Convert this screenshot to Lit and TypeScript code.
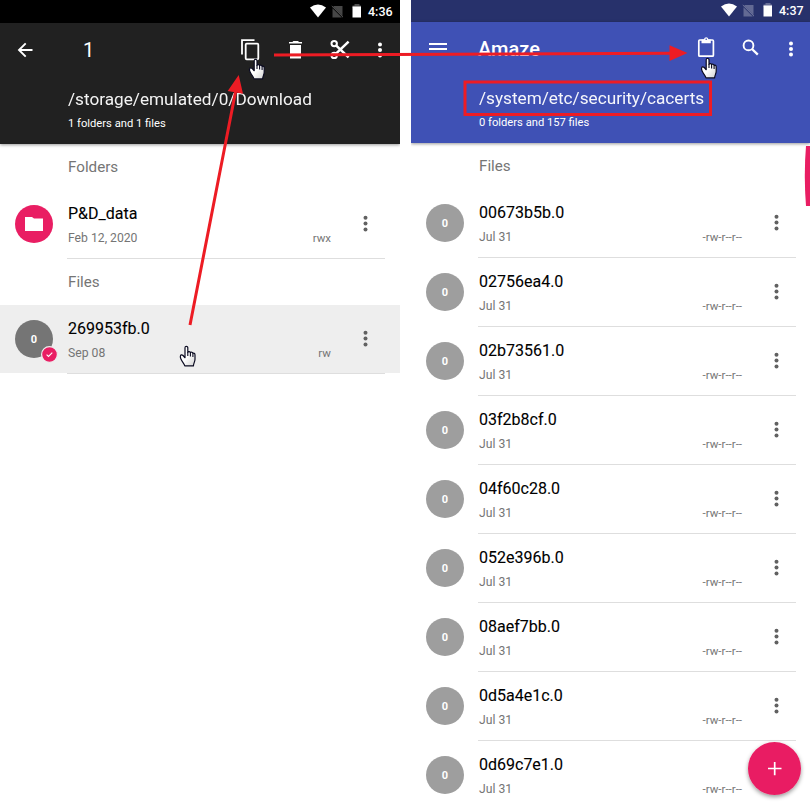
import { LitElement, html, css, svg, nothing } from "lit";
import { customElement, property } from "lit/decorators.js";

interface Entry {
  name: string;
  date: string;
  perms: string;
  folder?: boolean;
  selected?: boolean;
}

const hand = svg`<path d="M5.6 12.2V2.3C5.6 .3 8.4 .3 8.4 2.3V6.8C8.8 5.7 10.9 5.8 11 7.2C11.6 6.4 13.4 6.6 13.5 8C14.2 7.3 15.6 7.8 15.6 9.4V13.8C15.6 16 14.2 17.6 14 20.4H5.4C4.8 18 2.8 16.6 1.4 13.2C.2 10.6 1.4 8.7 3.1 9.6C4.3 10.2 4.6 11.4 5.6 12.2Z" fill="url(#palm)" stroke="#0a0a20" stroke-width="1.2" stroke-linejoin="round"/><path d="M8.4 6.5V10.6M11 7.2V11M13.5 8V11.4" stroke="#0a0a20" stroke-width="1.1" fill="none"/>`;

@customElement("status-bar")
export class StatusBar extends LitElement {
  @property() time = "";
  static styles = css`
    :host { display: flex; justify-content: flex-end; align-items: flex-start; height: 100%; color: #fff; }
    svg { display: block; flex: none; }
    .time { font: 500 12.5px/23px Roboto, sans-serif; width: 25px; margin-left: 5px; white-space: nowrap; }
  `;
  render() {
    return html`<svg width="54" height="22" viewBox="0 0 54 22">
        <path d="M1 7.4Q9 1.6 17 7.4L9 17.4Z" fill="#fff" />
        <path d="M24.5 6H33.5V16L24.5 7ZM23.5 8.2L32.8 17.5H23.5Z" fill="#fff" opacity=".28" />
        <path d="M22.8 6L34 17.2" stroke="#fff" stroke-opacity=".35" />
        <path d="M45.5 4H50.5V5.5H52V8H43.5V5.5H45.5Z" fill="#fff" opacity=".3" />
        <path d="M43.5 6.5H52V17.5H43.5Z" fill="#fff" />
      </svg>
      <div class="time">${this.time}</div>`;
  }
}

@customElement("file-row")
export class FileRow extends LitElement {
  @property({ attribute: false }) entry!: Entry;
  static styles = css`
    :host { display: block; height: 69px; flex: none; }
    .row { display: grid; grid-template-columns: 38px 263px 1fr; column-gap: 15px; height: 69px; padding-left: 15px; box-sizing: border-box; }
    .selected { background: linear-gradient(#eee 68px, transparent 68px); }
    .circle { position: relative; display: grid; place-items: center; width: 38px; height: 38px; margin-top: 15px; border-radius: 50%; background: #9e9e9e; color: #fff; font: 700 11px/39px Roboto, sans-serif; }
    .selected .circle { background: #757575; }
    .circle.folder { background: #e91e63; }
    .badge { position: absolute; left: 26px; top: 26px; }
    .info { display: grid; grid-template-columns: 1fr auto; grid-template-rows: 47px 21px; align-items: start; }
    .name { grid-column: 1 / 3; font: 400 16px/24px Roboto, sans-serif; color: #000; padding-top: 12px; -webkit-text-stroke: .1px #000; }
    .date { font: 400 12.2px/16px Roboto, sans-serif; color: #757575; margin-top: -7px; }
    .perms { font: 400 11.5px/16px Roboto, sans-serif; color: #757575; margin-top: -7px; }
    .line { grid-column: 1 / 3; height: 1px; background: #dedede; margin: 0 -54px 0 -1px; }
    .more { margin-top: 25px; margin-left: 12px; display: block; }
  `;
  render() {
    const e = this.entry;
    return html`<div class="row ${e.selected ? "selected" : ""}">
      <div class="circle ${e.folder ? "folder" : ""}">
        ${e.folder
          ? html`<svg width="18" height="14" viewBox="0 0 18 14"><path d="M0 0H7L9 1.5H18V14H0Z" fill="#fff" /></svg>`
          : "0"}
        ${e.selected
          ? html`<svg class="badge" width="17" height="17" viewBox="0 0 17 17"><circle cx="8.5" cy="8.5" r="7.9" fill="#e91e63" stroke="#eee" stroke-width="1.2" /><path d="M5.6 8.6L7.5 10.5L11.3 6.7" fill="none" stroke="#fff" stroke-width="1.1" /></svg>`
          : nothing}
      </div>
      <div class="info">
        <div class="name">${e.name}</div>
        <div class="date">${e.date}</div>
        <div class="perms">${e.perms}</div>
        <div class="line"></div>
      </div>
      <svg class="more" width="10" height="18" viewBox="0 0 10 18" fill="#616161">
        <circle cx="7.5" cy="2.8" r="2" /><circle cx="7.5" cy="8.6" r="2" /><circle cx="7.5" cy="14.4" r="2" />
      </svg>
    </div>`;
  }
}

@customElement("app-root")
export class AppRoot extends LitElement {
  static styles = css`
    :host { display: block; position: relative; width: 810px; height: 805px; overflow: hidden; background: #fff; font-family: Roboto, sans-serif; }
    .screens { display: grid; grid-template-columns: 400px 399px; column-gap: 11px; height: 805px; }
    .screen { display: flex; flex-direction: column; height: 805px; overflow: hidden; min-width: 0; }
    .status { flex: none; height: 23px; background: #000; padding-right: 7px; }
    .right .status { height: 22px; background: #27316b; padding-right: 6px; }
    .right status-bar { margin-top: -1px; }
    .bar { flex: none; height: 121px; background: #212121; color: #fff; box-shadow: 0 1px 3px rgba(0, 0, 0, .4); display: flex; flex-direction: column; }
    .right .bar { background: #3f51b5; }
    .tools { display: flex; height: 54px; }
    .tools svg { display: block; }
    .title { font: 400 20px/54px Roboto, sans-serif; flex: 1; }
    .right .title { font-weight: 500; }
    .path { font: 400 17.2px/22px Roboto, sans-serif; padding: 11px 0 0 68px; white-space: nowrap; opacity: .95; }
    .count { font: 400 11.2px/14px Roboto, sans-serif; padding: 7px 0 0 68px; }
    .section { flex: none; height: 46px; box-sizing: border-box; padding: 13px 0 0 68px; font: 400 15.2px/20px Roboto, sans-serif; color: #757575; }
    .overlay { position: absolute; left: 0; top: 0; }
  `;

  private left: Entry[] = [
    { name: "P&D_data", date: "Feb 12, 2020", perms: "rwx", folder: true },
    { name: "269953fb.0", date: "Sep 08", perms: "rw", selected: true },
  ];
  private right: Entry[] = [
    "00673b5b.0", "02756ea4.0", "02b73561.0", "03f2b8cf.0", "04f60c28.0",
    "052e396b.0", "08aef7bb.0", "0d5a4e1c.0", "0d69c7e1.0",
  ].map((name) => ({ name, date: "Jul 31", perms: "-rw-r--r--" }));

  render() {
    return html`
      <div class="screens">
        <section class="screen left">
          <div class="status"><status-bar time="4:36"></status-bar></div>
          <header class="bar">
            <div class="tools">
              <svg width="83" height="54" viewBox="0 0 83 54"><path d="M32.5 27H19M25.7 20.3L19 27L25.7 33.7" fill="none" stroke="#fff" stroke-width="1.9" /></svg>
              <div class="title">1</div>
              <svg width="170" height="54" viewBox="230 23 170 54" fill="none" stroke="#fff">
                <path d="M242 54.5V40.2H254.5" stroke-width="1.8" />
                <rect x="245.7" y="43.7" width="12.6" height="15.6" rx="1" stroke-width="1.8" />
                <path d="M289 42H292.4L293.4 41H298L299 42H302V43.6H289ZM290 45H301V58.5H290Z" fill="#fff" stroke="none" />
                <circle cx="334.2" cy="43.6" r="2.7" stroke-width="2" />
                <circle cx="334.2" cy="55.4" r="2.7" stroke-width="2" />
                <path d="M336 45.3L348.6 57.4M336 53.7L348.6 41.6" stroke-width="2.5" />
                <g fill="#fff" stroke="none"><circle cx="380" cy="44.5" r="2" /><circle cx="380" cy="50" r="2" /><circle cx="380" cy="55.5" r="2" /></g>
              </svg>
            </div>
            <div class="path">/storage/emulated/0/Download</div>
            <div class="count">1 folders and 1 files</div>
          </header>
          <div class="section">Folders</div>
          <file-row .entry=${this.left[0]}></file-row>
          <div class="section">Files</div>
          <file-row .entry=${this.left[1]}></file-row>
        </section>
        <section class="screen right">
          <div class="status"><status-bar time="4:37"></status-bar></div>
          <header class="bar">
            <div class="tools">
              <svg width="67" height="54" viewBox="411 22 67 54" fill="#fff"><path d="M429 43H447V45H429ZM429 48H447V50H429ZM429 53H447V55H429Z" /></svg>
              <div class="title">Amaze</div>
              <svg width="120" height="54" viewBox="690 22 120 54" fill="none" stroke="#fff">
                <rect x="698.8" y="40" width="14.6" height="16.2" rx="1" stroke-width="1.7" />
                <path d="M701.5 39.5H704C704.4 36.5 708 36.5 708.4 39.5H710.8V43.3H701.5Z" fill="#fff" stroke="none" />
                <circle cx="706.2" cy="39.3" r=".8" fill="#3f51b5" stroke="none" />
                <circle cx="748.5" cy="45.4" r="4.9" stroke-width="1.9" />
                <path d="M752 49L757.8 54.6" stroke-width="2.3" />
                <g fill="#fff" stroke="none"><circle cx="791" cy="43.5" r="2" /><circle cx="791" cy="49" r="2" /><circle cx="791" cy="54.5" r="2" /></g>
              </svg>
            </div>
            <div class="path">/system/etc/security/cacerts</div>
            <div class="count">0 folders and 157 files</div>
          </header>
          <div class="section">Files</div>
          ${this.right.map((e) => html`<file-row .entry=${e}></file-row>`)}
        </section>
      </div>
      <svg class="overlay" width="810" height="805" viewBox="0 0 810 805">
        <defs>
          <filter id="s" x="-30%" y="-30%" width="160%" height="160%"><feDropShadow dx="0" dy="2" stdDeviation="2" flood-color="#000" flood-opacity=".4" /></filter>
          <linearGradient id="palm" x1="0" y1="0" x2="1" y2="1"><stop offset=".5" stop-color="#fff" /><stop offset="1" stop-color="#d0d0d0" /></linearGradient>
        </defs>
        <path d="M810 146H806Q803.6 176 806 206H810Z" fill="#e91e63" />
        <circle cx="774.5" cy="768.5" r="26.5" fill="#e91e63" filter="url(#s)" />
        <path d="M768 768.5H781.5M774.7 762V775.2" stroke="#fff" stroke-width="1.7" />
        <g stroke="#ed1c24" fill="none" stroke-width="3">
          <path d="M190 325L235.5 92M274 55L672 53.3" />
          <rect x="465" y="82" width="245.5" height="32.5" />
        </g>
        <path d="M238.7 75L227.7 91L243 93.7ZM687.5 53L669.5 45.3V61Z" fill="#ed1c24" />
        <g transform="translate(248.6 58.5)">${hand}</g>
        <g transform="translate(700.6 57.5)">${hand}</g>
        <g transform="translate(179.4 345.5)">${hand}</g>
      </svg>`;
  }
}
